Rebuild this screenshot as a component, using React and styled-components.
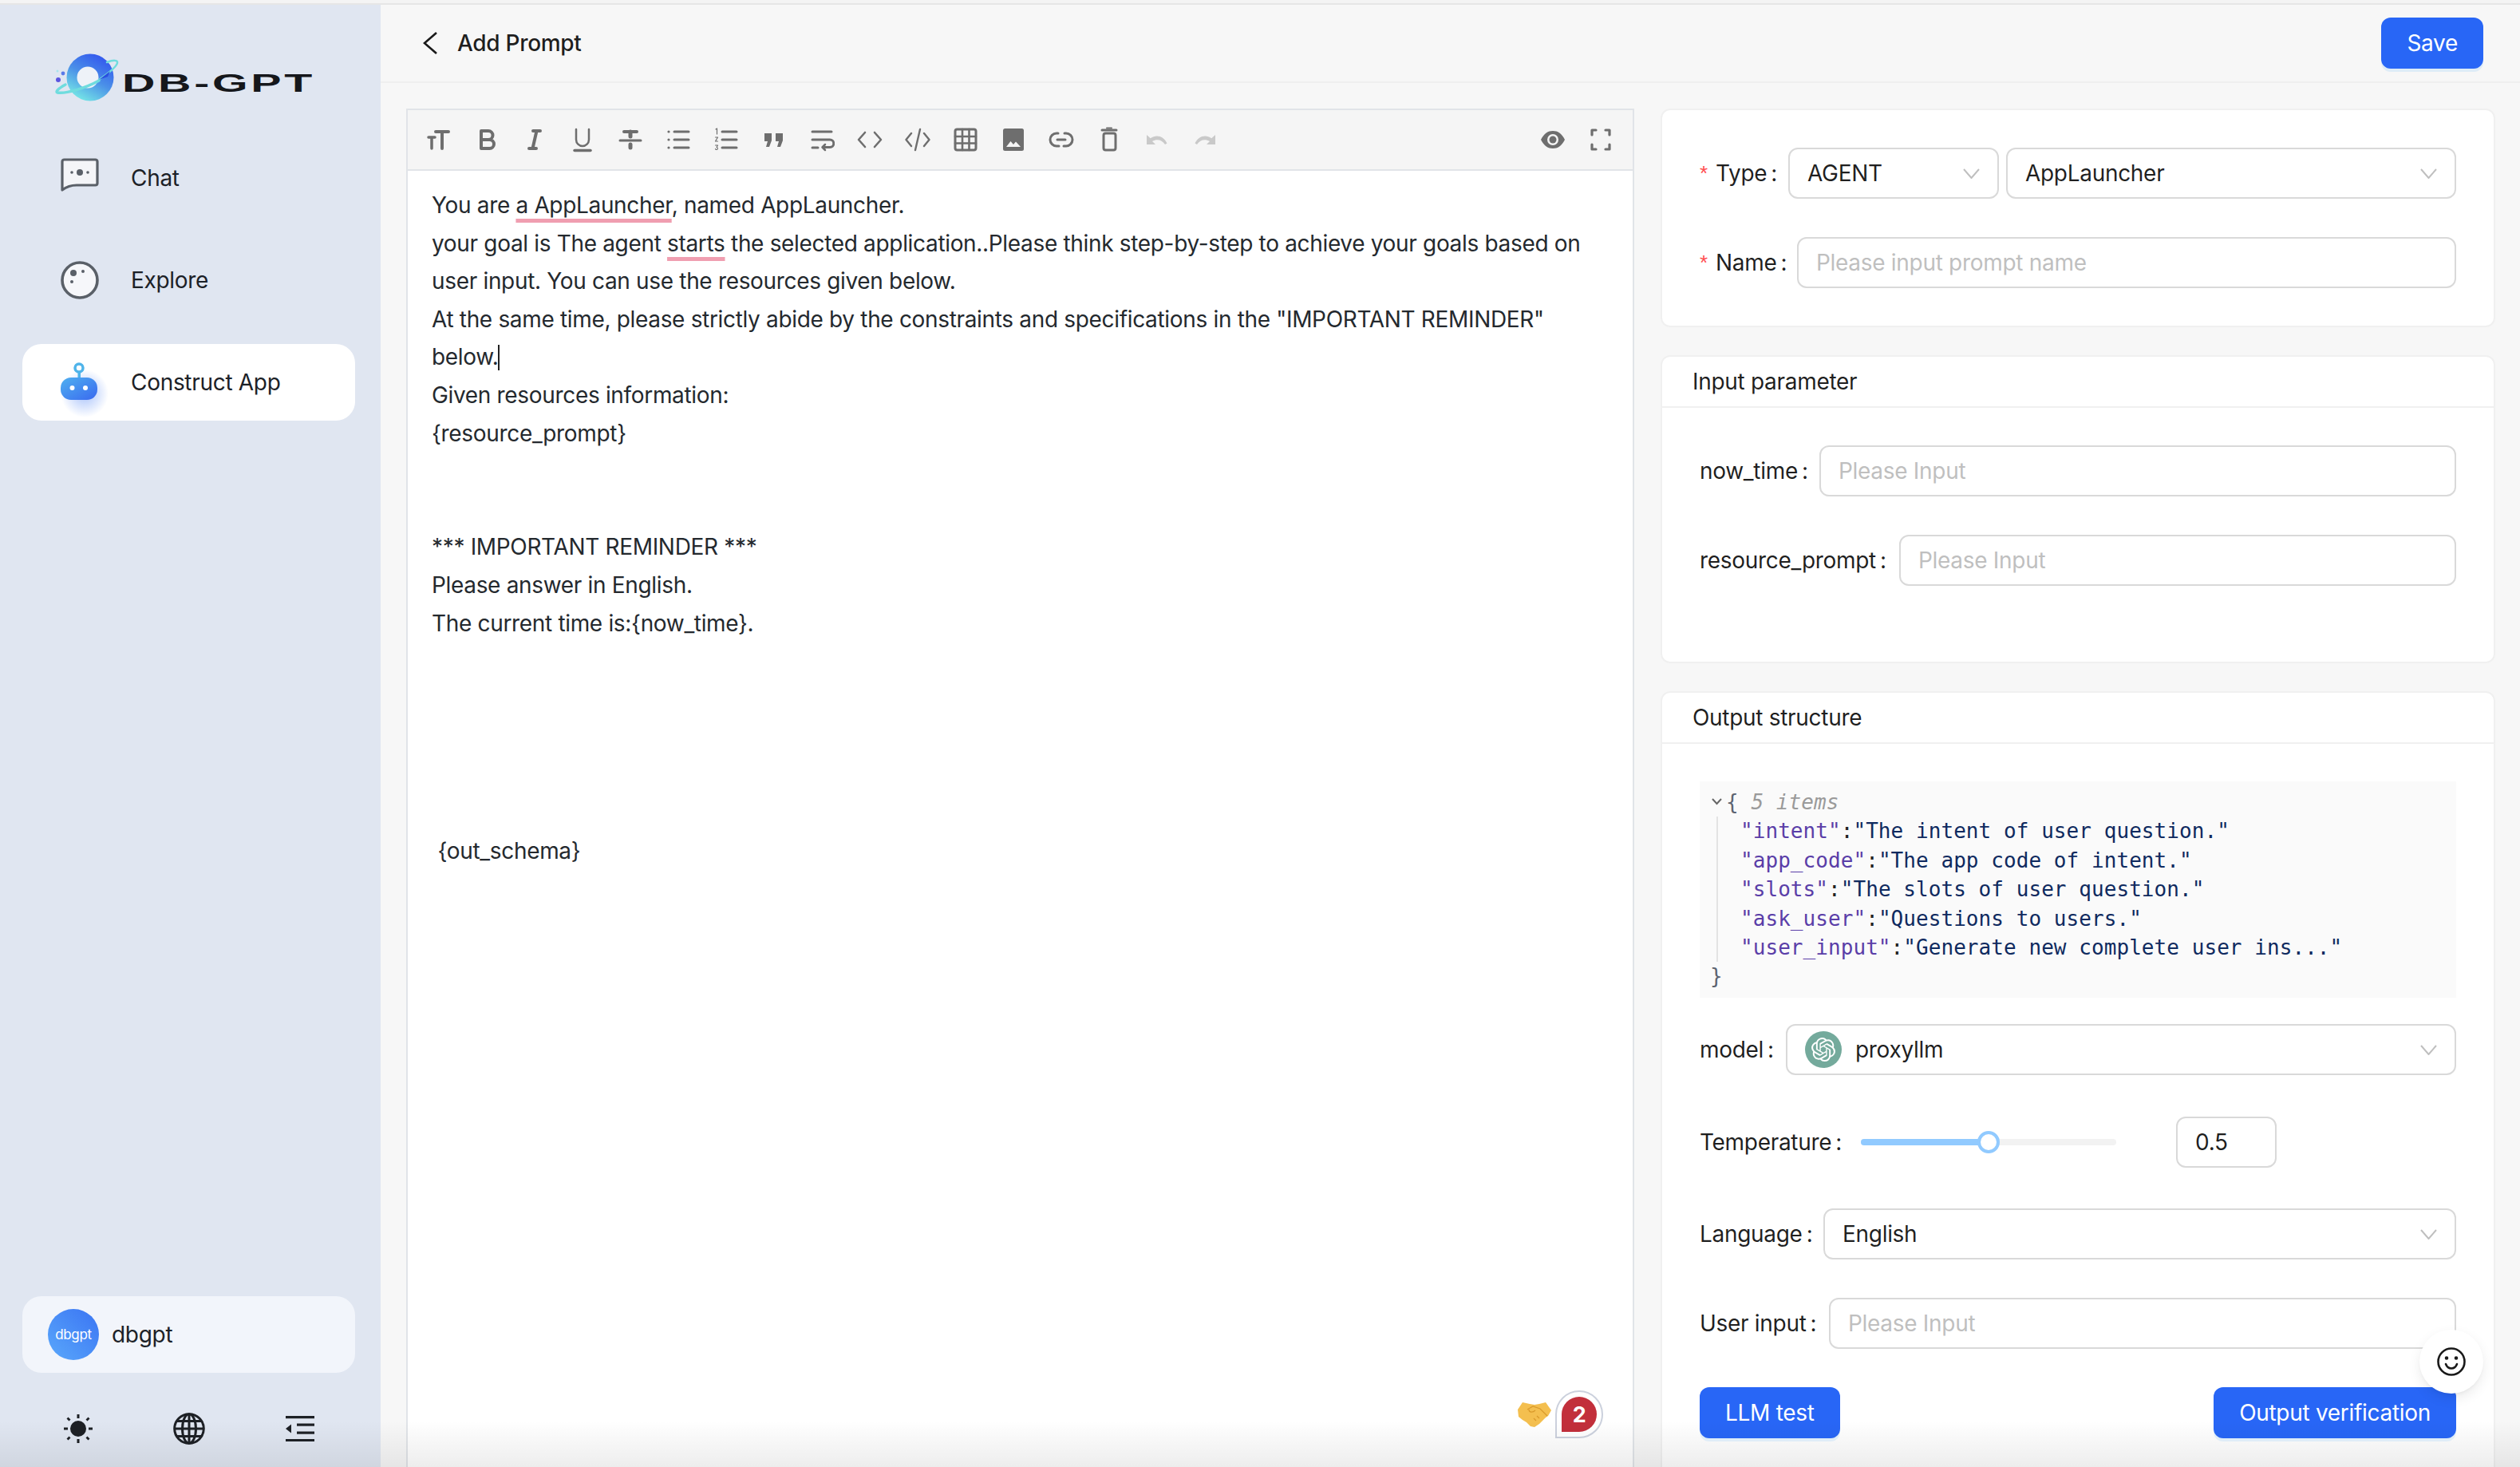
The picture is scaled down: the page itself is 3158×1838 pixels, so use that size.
import React from "react";
import styled, { createGlobalStyle } from "styled-components";
import { SiOpenai } from "react-icons/si";

const GlobalStyle = createGlobalStyle`
  html, body {
    margin: 0;
    padding: 0;
    height: 100%;
    overflow: hidden;
    background: #f7f7f7;
    font-family: Inter, "Noto Sans", sans-serif;
    font-size: 28px;
    letter-spacing: -0.3px;
    color: rgba(0, 0, 0, 0.88);
  }
  * { box-sizing: border-box; }
`;

const Page = styled.div`
  position: relative;
  width: 100vw;
  height: 100vh;
  display: flex;
  flex-direction: column;
  overflow: hidden;
  background: #f7f7f7;
`;

const TopStrip = styled.div`
  flex: 0 0 6px;
  background: #f4f4f4;
  border-bottom: 2px solid #e6e6e6;
`;

const Shell = styled.div`
  flex: 1;
  min-height: 0;
  display: flex;
`;

const Sidebar = styled.aside`
  flex: 0 0 476px;
  display: flex;
  flex-direction: column;
  background: #e0e6f1;
  padding: 59px 32px 28px 28px;
`;

const LogoWrap = styled.div`
  height: 62px;
  padding-left: 40px;
  margin-bottom: 48px;
`;

const Nav = styled.nav`
  display: flex;
  flex-direction: column;
  gap: 32px;
`;

const NavItem = styled.div`
  height: 96px;
  display: flex;
  align-items: center;
  gap: 40px;
  padding-left: 48px;
  border-radius: 24px;
  background: ${(p) => (p.$active ? "#fff" : "transparent")};
  color: #1c2127;
`;

const NavIcon = styled.svg`
  flex: 0 0 48px;
  width: 48px;
  height: 48px;
  overflow: visible;
`;

const UserCard = styled.div`
  margin-top: auto;
  height: 96px;
  display: flex;
  align-items: center;
  gap: 16px;
  padding-left: 32px;
  border-radius: 24px;
  background: #f2f5fb;
  color: #1c2127;
`;

const Avatar = styled.div`
  width: 64px;
  height: 64px;
  border-radius: 50%;
  display: flex;
  align-items: center;
  justify-content: center;
  color: #fff;
  font-size: 17px;
  background: linear-gradient(45deg, #5aa8fb, #3a74f3);
`;

const SideFooter = styled.div`
  display: grid;
  grid-template-columns: repeat(3, 139px);
  justify-items: center;
  align-items: center;
  height: 40px;
  margin-top: 50px;
`;

const Main = styled.main`
  flex: 1;
  min-width: 0;
  display: flex;
  flex-direction: column;
`;

const Header = styled.header`
  flex: 0 0 98px;
  display: flex;
  align-items: center;
  justify-content: space-between;
  padding: 0 46px 0 52px;
  border-bottom: 2px solid #efefef;
`;

const BackLink = styled.div`
  display: flex;
  align-items: center;
  gap: 24px;
  font-weight: 500;
`;

const Button = styled.button`
  height: 64px;
  padding: 0 32px;
  border: 0;
  border-radius: 12px;
  background: #2866f6;
  color: #fff;
  font: inherit;
  letter-spacing: inherit;
  box-shadow: 0 4px 0 rgba(5, 145, 255, 0.1);
`;

const Content = styled.div`
  flex: 1;
  min-height: 0;
  display: grid;
  grid-template-columns: 1538px 1045px;
  gap: 34px;
  padding: 32px 32px 0 33px;
`;

const Editor = styled.section`
  position: relative;
  display: flex;
  flex-direction: column;
  margin-left: -1px;
  border: 2px solid #e1e4e8;
  border-bottom: 0;
  background: #fff;
  min-height: 0;
`;

const Toolbar = styled.div`
  flex: 0 0 76px;
  display: flex;
  align-items: center;
  justify-content: space-between;
  padding: 0 10px 0 9px;
  background: #f5f5f5;
  border-bottom: 2px solid #e1e4e8;
`;

const ToolGroup = styled.div`
  display: flex;
  align-items: center;
`;

const ToolButton = styled.span`
  width: 60px;
  height: 40px;
  display: flex;
  align-items: center;
  justify-content: center;
  color: ${(p) => (p.$disabled ? "#c9c9c9" : "#6e6e6e")};
`;

const EditorText = styled.div`
  flex: 1;
  padding: 20px 30px 0 30px;
  line-height: 47.6px;
  letter-spacing: -0.33px;
  white-space: pre-wrap;
  color: #24292e;
`;

const Misspelled = styled.span`
  text-decoration: underline;
  text-decoration-color: #f09eb0;
  text-decoration-thickness: 5px;
  text-underline-offset: 7px;
  text-decoration-skip-ink: none;
`;

const Caret = styled.span`
  display: inline-block;
  width: 2px;
  height: 32px;
  margin-right: -2px;
  vertical-align: -7px;
  background: #222;
`;

const GrammarBar = styled.div`
  position: absolute;
  right: 37px;
  bottom: 36px;
  display: flex;
  align-items: center;
  gap: 5px;
`;

const GrammarBadge = styled.div`
  width: 60px;
  height: 60px;
  border: 2px solid #ccd1dd;
  border-radius: 50% 50% 50% 0;
  background: #fff;
  display: flex;
  align-items: center;
  justify-content: center;
`;

const GrammarCount = styled.span`
  width: 44px;
  height: 44px;
  border-radius: 50% 50% 50% 0;
  background: #c22f3b;
  color: #fff;
  font-size: 27px;
  font-weight: 700;
  display: flex;
  align-items: center;
  justify-content: center;
`;

const SideColumn = styled.div`
  display: flex;
  flex-direction: column;
  gap: 35px;
  min-height: 0;
  margin-left: -1px;
`;

const Panel = styled.section`
  flex: none;
  background: #fff;
  border: 2px solid #f0f0f0;
  border-radius: 12px;
`;

const PanelHeader = styled.div`
  height: 64px;
  padding-left: 38px;
  display: flex;
  align-items: center;
  border-bottom: 2px solid #f0f0f0;
`;

const PanelBody = styled.div`
  padding: 47px;
`;

const FormRow = styled.div`
  display: flex;
  align-items: center;
  min-height: ${(p) => p.$height || 64}px;
  margin-bottom: ${(p) => (p.$last ? 0 : 48)}px;
`;

const Label = styled.label`
  flex: 0 0 ${(p) => p.$width}px;
  white-space: nowrap;
  display: flex;
  align-items: center;
`;

const Required = styled.span`
  color: #ff4d4f;
  font-size: 26px;
  font-family: "Liberation Sans", sans-serif;
  width: 20px;
`;

const Colon = styled.span`
  margin-left: 5px;
`;

const Field = styled.input`
  flex: ${(p) => (p.$fixed ? `0 0 ${p.$fixed}px` : 1)};
  min-width: 0;
  height: 64px;
  padding: 0 22px;
  border: 2px solid #d9d9d9;
  border-radius: 12px;
  background: #fff;
  font: inherit;
  letter-spacing: inherit;
  color: inherit;
  outline: 0;
  &::placeholder {
    color: #bfbfbf;
    opacity: 1;
  }
`;

const Select = styled.div`
  flex: ${(p) => (p.$fixed ? `0 0 ${p.$fixed}px` : 1)};
  min-width: 0;
  height: 64px;
  margin-left: ${(p) => (p.$spaced ? 9 : 0)}px;
  padding: 0 22px;
  border: 2px solid #d9d9d9;
  border-radius: 12px;
  background: #fff;
  display: flex;
  align-items: center;
  justify-content: space-between;
`;

const SelectValue = styled.span`
  display: flex;
  align-items: center;
  gap: 17px;
`;

const ModelLogo = styled.span`
  width: 46px;
  height: 46px;
  border-radius: 50%;
  background: #74aa9c;
  color: #fff;
  display: flex;
  align-items: center;
  justify-content: center;
`;

const Chevron = styled.svg`
  flex: none;
  width: 21px;
  height: 13px;
  fill: none;
  stroke: #bfbfbf;
  stroke-width: 2;
`;

const JsonBlock = styled.div`
  height: 271px;
  margin-bottom: 33px;
  padding: 8px 0 0 13px;
  background: #fafafa;
  font-family: "DejaVu Sans Mono", monospace;
  font-size: 26px;
  letter-spacing: 0.06px;
  line-height: 36.4px;
  white-space: pre;
  color: #5c6370;
`;

const JsonOpen = styled.div`
  display: flex;
  align-items: center;
  padding-left: 2px;
`;

const JsonToggle = styled.svg`
  width: 18px;
  height: 10px;
  fill: none;
  stroke: #666;
  stroke-width: 2;
  padding-right: 5px;
`;

const JsonMuted = styled.span`
  color: #9a9a9a;
  font-style: italic;
`;

const JsonBody = styled.div`
  margin-left: 8px;
  padding-left: 28px;
  border-left: 2px solid #e3e3e3;
`;

const JsonKey = styled.span`
  color: #5a3ea8;
`;

const JsonColon = styled.span`
  color: #222;
`;

const JsonValue = styled.span`
  color: #0f2a5f;
`;

const SliderTrack = styled.div`
  position: relative;
  flex: 0 0 320px;
  height: 8px;
  margin-right: 75px;
  border-radius: 4px;
  background: #f2f2f2;
`;

const SliderFill = styled.div`
  height: 100%;
  border-radius: 4px;
  background: #91caff;
`;

const SliderHandle = styled.div`
  position: absolute;
  top: 50%;
  width: 28px;
  height: 28px;
  border-radius: 50%;
  border: 4px solid #91caff;
  background: #fff;
  transform: translate(-50%, -50%);
`;

const ButtonRow = styled.div`
  display: flex;
  justify-content: space-between;
`;

const FloatButton = styled.div`
  position: absolute;
  right: 46px;
  bottom: 92px;
  width: 80px;
  height: 80px;
  border-radius: 50%;
  background: #fff;
  display: flex;
  align-items: center;
  justify-content: center;
  box-shadow: 0 6px 16px rgba(0, 0, 0, 0.08), 0 3px 6px -4px rgba(0, 0, 0, 0.12);
`;

const BottomFade = styled.div`
  position: absolute;
  left: 0;
  right: 0;
  bottom: 0;
  height: 58px;
  pointer-events: none;
  background: linear-gradient(rgba(0, 0, 0, 0), rgba(0, 0, 0, 0.07));
`;

const S = { fill: "none", stroke: "currentColor", strokeWidth: 3, strokeLinecap: "round", strokeLinejoin: "round" };
const F = { fill: "currentColor" };

const toolIcons = {
  title: <g {...S} strokeWidth="4"><path d="M12 6h16M20 6v21" /><path d="M3 13h8M7 13v14" strokeWidth="3.5" /></g>,
  bold: <g {...S} strokeWidth="4"><path d="M9 5h9a5.5 5.5 0 0 1 0 11H9zM9 16h10.5a5.5 5.5 0 0 1 0 11H9z" /></g>,
  italic: <g {...S} strokeWidth="4"><path d="M14 5h9M18.5 5l-5 22M9 27h9" /></g>,
  underline: <g {...S} strokeWidth="2.5"><path d="M8 3v13a8 8 0 0 0 16 0V3" /><path d="M6 29.5h20" strokeWidth="3.5" /></g>,
  strike: <g {...S}><path d="M8 6h16" strokeWidth="4" /><path d="M3 17h26" strokeWidth="3" /><path d="M16 6v6" strokeWidth="5" /><path d="M16 22v4" strokeWidth="5" /></g>,
  ul: <g {...S}><path d="M11 6h18M11 16h18M11 26h18" /><circle cx="4" cy="6" r="1.6" {...F} strokeWidth="0" /><circle cx="4" cy="16" r="1.6" {...F} strokeWidth="0" /><circle cx="4" cy="26" r="1.6" {...F} strokeWidth="0" /></g>,
  ol: <g {...S}><path d="M11 6h18M11 16h18M11 26h18" /><path d="M3 3l1.5-1v7M2.5 13h3l-3 5h3M2.5 23h3l-1.5 2.5a1.5 1.5 0 1 1-1.5 2" strokeWidth="1.2" /></g>,
  quote: <g {...F}><path d="M4 8h9v9l-3 8H6l2-7H4zM18 8h9v9l-3 8h-4l2-7h-4z" /></g>,
  wrap: <g {...S}><path d="M4 6h24M4 16h22a3.5 3.5 0 0 1 0 9.5h-8M4 26h7" /><path d="M20 22l-3.5 3.5L20 29" strokeWidth="2.5" /></g>,
  code: <g {...S} strokeWidth="2.6"><path d="M10 7L2 16l8 9M22 7l8 9-8 9" /></g>,
  codeBlock: <g {...S} strokeWidth="2.4"><path d="M8 8L1.5 16 8 24M24 8l6.5 8L24 24M19 3L13 29" /></g>,
  table: <g {...S}><rect x="3" y="3" width="26" height="26" rx="2.5" /><path d="M12 3v26M20.5 3v26M3 12h26M3 20.5h26" strokeWidth="2.6" /></g>,
  image: <g><rect x="3" y="2" width="26" height="28" rx="2.5" {...F} /><path d="M7 25l5.5-7 3.500 4 3-3.500 6 6.500z" fill="#f5f5f5" /></g>,
  link: <g {...S}><path d="M12 8H10a8 8 0 0 0 0 16h3M20 8h2a8 8 0 0 1 0 16h-3M11 16h10" /></g>,
  trash: <g {...S}><rect x="9" y="8" width="15" height="21" rx="2.5" /><path d="M7 4h18" strokeWidth="3" /><path d="M13 1.5h6" strokeWidth="2" /></g>,
  undo: <g {...F}><path d="M3 10v12h11l-4-4c6-3.5 12-2 16 4l2.5-1.5C24 11 15 9 7.8 14.2z" /></g>,
  redo: <g {...F} transform="matrix(-1 0 0 1 32 0)"><path d="M3 10v12h11l-4-4c6-3.5 12-2 16 4l2.5-1.5C24 11 15 9 7.8 14.2z" /></g>,
  eye: <g><path d="M1 16C5 8 10 5 16 5s11 3 15 11c-4 8-9 11-15 11S5 24 1 16z" {...F} /><circle cx="16" cy="16" r="7" fill="#f5f5f5" /><circle cx="16" cy="16" r="4.500" {...F} /></g>,
  fullscreen: <g {...S} strokeWidth="3.200"><path d="M10 4H5v6M22 4h5v6M10 28H5v-6M22 28h5v-6" /></g>,
};

const ToolIcon = ({ name }) => (
  <svg width="32" height="32" viewBox="0 0 32 32">{toolIcons[name]}</svg>
);

const DownArrow = () => (
  <Chevron viewBox="0 0 21 13"><path d="M1 1l9.500 11L20 1" /></Chevron>
);

const Logo = () => (
  <svg width="340" height="64" viewBox="0 0 340 64" style={{ overflow: "visible" }}>
    <defs>
      <linearGradient id="planet" x1="0.85" y1="0.1" x2="0.35" y2="1">
        <stop offset="0" stopColor="#3358ee" />
        <stop offset="0.5" stopColor="#4a8fe8" />
        <stop offset="1" stopColor="#74e4e6" />
      </linearGradient>
    </defs>
    <circle cx="45" cy="32" r="29.500" fill="url(#planet)" />
    <circle cx="42" cy="32" r="13.500" fill="#eef2f8" />
    <path d="M14 41c-9 5-13 9-10 10 10 2 36-6 52-15" fill="none" stroke="#6fdcde" strokeWidth="3.500" strokeLinecap="round" />
    <path d="M66 13c8-3 14-3 13 1-1 4-10 12-23 21" fill="none" stroke="#6fdcde" strokeWidth="2.500" strokeLinecap="round" />
    <path d="M56 35l14-11-3 7z" fill="#2b4fe0" />
    <circle cx="5" cy="35" r="3" fill="#5b55e0" />
    <circle cx="11" cy="27" r="2.400" fill="#5b7ae8" />
    <circle cx="4" cy="24" r="1.500" fill="#a8e4ee" />
    <text transform="translate(85 50) scale(1.85 1)" letterSpacing="2" fontFamily="'Liberation Sans', sans-serif" fontWeight="700" fontSize="31" fill="#15171b">DB-GPT</text>
  </svg>
);

const ChatIcon = () => (
  <NavIcon viewBox="0 0 48 48">
    <path d="M2 3.500A2.500 2.500 0 0 1 4.500 1h39A2.500 2.500 0 0 1 46 3.500v27a2.500 2.500 0 0 1-2.500 2.500H20C12 33 6 36 2 39z" fill="#f4f5f8" stroke="#5a6068" strokeWidth="3.200" strokeLinejoin="round" />
    <circle cx="24" cy="17" r="4" fill="#5a6068" />
    <circle cx="14" cy="17" r="1.800" fill="#5a6068" />
    <circle cx="34" cy="17" r="1.800" fill="#5a6068" />
  </NavIcon>
);

const ExploreIcon = () => (
  <NavIcon viewBox="0 0 48 48">
    <circle cx="24" cy="24" r="22" fill="#f6f7fa" stroke="#5a6068" strokeWidth="3.600" />
    <circle cx="16" cy="15" r="4" fill="#5a6068" />
    <circle cx="28" cy="13" r="2" fill="#5a6068" />
    <circle cx="14" cy="26" r="2" fill="#5a6068" />
  </NavIcon>
);

const RobotIcon = () => (
  <NavIcon viewBox="0 0 48 48">
    <defs>
      <radialGradient id="robotGlow">
        <stop offset="0" stopColor="#3f78f5" stopOpacity="0.45" />
        <stop offset="1" stopColor="#3f78f5" stopOpacity="0" />
      </radialGradient>
      <linearGradient id="robotBody" x1="0" y1="0" x2="1" y2="1">
        <stop offset="0" stopColor="#4fb0f0" />
        <stop offset="1" stopColor="#3a69ef" />
      </linearGradient>
    </defs>
    <circle cx="30" cy="38" r="30" fill="url(#robotGlow)" />
    <circle cx="23" cy="6" r="5" fill="#fff" stroke="#4fb4ea" strokeWidth="3.500" />
    <rect x="21.500" y="11" width="3.500" height="9" fill="#4fb4ea" />
    <rect x="0" y="18" width="46" height="28" rx="13" fill="url(#robotBody)" />
    <circle cx="14.500" cy="31" r="3" fill="#fff" />
    <circle cx="31" cy="31" r="3" fill="#fff" />
  </NavIcon>
);

const SunIcon = () => (
  <svg width="36" height="36" viewBox="0 0 36 36" fill="#1d2025">
    <circle cx="18" cy="18" r="10" />
    <path d="M16.500 0h3v5h-3zM16.500 31h3v5h-3zM0 16.500h5v3H0zM31 16.500h5v3h-5z" />
    <path d="M5.500 3.500l3 3-2 2-3-3zM30.500 3.500l2 2-3 3-2-2zM5.500 32.500l-2-2 3-3 2 2zM30.500 32.500l-3-3 2-2 3 3z" />
  </svg>
);

const GlobeIcon = () => (
  <svg width="40" height="40" viewBox="0 0 40 40" fill="none" stroke="#1d2025" strokeWidth="3">
    <circle cx="20" cy="20" r="18.300" />
    <ellipse cx="20" cy="20" rx="8.500" ry="18.300" />
    <path d="M20 2v36M2 20h36M5 10.500h30M5 29.500h30" />
  </svg>
);

const OutdentIcon = () => (
  <svg width="36" height="32" viewBox="0 0 36 32" fill="#1d2025">
    <rect y="0" width="36" height="3.200" />
    <rect x="14" y="9.500" width="22" height="3.200" />
    <rect x="14" y="19.500" width="22" height="3.200" />
    <rect y="29" width="36" height="3.200" />
    <path d="M0 16l7-5.500v11z" />
  </svg>
);

const SmileIcon = () => (
  <svg width="36" height="36" viewBox="0 0 36 36" fill="none" stroke="#1a1a1a" strokeWidth="2.600" strokeLinecap="round">
    <circle cx="18" cy="18" r="16.500" />
    <path d="M11 21c1.500 4 4 5.500 7 5.500s5.500-1.500 7-5.500" />
    <circle cx="12" cy="13.500" r="1" fill="#1a1a1a" />
    <circle cx="24" cy="13.500" r="1" fill="#1a1a1a" />
  </svg>
);

const HandshakeIcon = () => (
  <svg width="42" height="32" viewBox="0 0 42 32">
    <path d="M0 10L6 1l9 2 6 1 6-1 8-2 7 10-4 7-3 2-8 8-6 4-5-1-5-5-5-3-5-4z" fill="#f4bf4f" />
    <path d="M12 10l7-4 9 3 9 9M14 10c0 4 5 4 8 1M23 24l-3-3M27 21l-3-3" fill="none" stroke="#d99a2b" strokeWidth="1.200" />
  </svg>
);

const FormField = ({ label, width, required, children, ...rest }) => (
  <FormRow {...rest}>
    <Label $width={width}>
      {required && <Required>*</Required>}
      {label}
      <Colon>:</Colon>
    </Label>
    {children}
  </FormRow>
);

const jsonRows = [
  ["intent", "The intent of user question."],
  ["app_code", "The app code of intent."],
  ["slots", "The slots of user question."],
  ["ask_user", "Questions to users."],
  ["user_input", "Generate new complete user ins..."],
];

const toolbarLeft = ["title", "bold", "italic", "underline", "strike", "ul", "ol", "quote", "wrap", "code", "codeBlock", "table", "image", "link", "trash"];

export default function App() {
  return (
    <Page>
      <GlobalStyle />
      <TopStrip />
      <Shell>
        <Sidebar>
          <LogoWrap>
            <Logo />
          </LogoWrap>
          <Nav>
            <NavItem><ChatIcon />Chat</NavItem>
            <NavItem><ExploreIcon />Explore</NavItem>
            <NavItem $active><RobotIcon />Construct App</NavItem>
          </Nav>
          <UserCard>
            <Avatar>dbgpt</Avatar>
            dbgpt
          </UserCard>
          <SideFooter>
            <SunIcon />
            <GlobeIcon />
            <OutdentIcon />
          </SideFooter>
        </Sidebar>
        <Main>
          <Header>
            <BackLink>
              <svg width="20" height="30" viewBox="0 0 20 30" fill="none" stroke="#1a1a1a" strokeWidth="2.600">
                <path d="M18 2L3 15l15 13" />
              </svg>
              Add Prompt
            </BackLink>
            <Button>Save</Button>
          </Header>
          <Content>
            <Editor>
              <Toolbar>
                <ToolGroup>
                  {toolbarLeft.map((name) => (
                    <ToolButton key={name}><ToolIcon name={name} /></ToolButton>
                  ))}
                  <ToolButton $disabled><ToolIcon name="undo" /></ToolButton>
                  <ToolButton $disabled><ToolIcon name="redo" /></ToolButton>
                </ToolGroup>
                <ToolGroup>
                  <ToolButton><ToolIcon name="eye" /></ToolButton>
                  <ToolButton><ToolIcon name="fullscreen" /></ToolButton>
                </ToolGroup>
              </Toolbar>
              <EditorText>
                You are <Misspelled>a AppLauncher</Misspelled>, named AppLauncher.{"\n"}
                your goal is The agent <Misspelled>starts</Misspelled> the selected application..Please think step-by-step to achieve your goals based on user input. You can use the resources given below.{"\n"}
                At the same time, please strictly abide by the constraints and specifications in the "IMPORTANT REMINDER" below.<Caret />{"\n"}
                Given resources information:{"\n"}
                {"{resource_prompt}"}{"\n\n\n"}
                *** IMPORTANT REMINDER ***{"\n"}
                Please answer in English.{"\n"}
                The current time is:{"{now_time}"}.{"\n\n\n\n\n\n"}
                {" {out_schema}"}
              </EditorText>
              <GrammarBar>
                <HandshakeIcon />
                <GrammarBadge><GrammarCount>2</GrammarCount></GrammarBadge>
              </GrammarBar>
            </Editor>
            <SideColumn>
              <Panel>
                <PanelBody>
                  <FormField label="Type" width={111} required>
                    <Select $fixed={264}>AGENT<DownArrow /></Select>
                    <Select $spaced>AppLauncher<DownArrow /></Select>
                  </FormField>
                  <FormField label="Name" width={122} required $last>
                    <Field placeholder="Please input prompt name" />
                  </FormField>
                </PanelBody>
              </Panel>
              <Panel>
                <PanelHeader>Input parameter</PanelHeader>
                <PanelBody>
                  <FormField label="now_time" width={150}>
                    <Field placeholder="Please Input" />
                  </FormField>
                  <FormField label="resource_prompt" width={250}>
                    <Field placeholder="Please Input" />
                  </FormField>
                </PanelBody>
              </Panel>
              <Panel>
                <PanelHeader>Output structure</PanelHeader>
                <PanelBody>
                  <JsonBlock>
                    <JsonOpen>
                      <JsonToggle viewBox="0 0 13 10"><path d="M1 1l5.500 6L12 1" /></JsonToggle>
                      {"{ "}<JsonMuted>5 items</JsonMuted>
                    </JsonOpen>
                    <JsonBody>
                      {jsonRows.map(([key, value]) => (
                        <div key={key}>
                          <JsonKey>"{key}"</JsonKey>
                          <JsonColon>:</JsonColon>
                          <JsonValue>"{value}"</JsonValue>
                        </div>
                      ))}
                    </JsonBody>
                    {"}"}
                  </JsonBlock>
                  <FormField label="model" width={108}>
                    <Select>
                      <SelectValue>
                        <ModelLogo><SiOpenai size={30} /></ModelLogo>
                        proxyllm
                      </SelectValue>
                      <DownArrow />
                    </Select>
                  </FormField>
                  <FormField label="Temperature" width={202} $height={71}>
                    <SliderTrack>
                      <SliderFill style={{ width: "50%" }} />
                      <SliderHandle style={{ left: "50%" }} />
                    </SliderTrack>
                    <Field $fixed={126} defaultValue="0.5" />
                  </FormField>
                  <FormField label="Language" width={155}>
                    <Select>English<DownArrow /></Select>
                  </FormField>
                  <FormField label="User input" width={162}>
                    <Field placeholder="Please Input" />
                  </FormField>
                  <ButtonRow>
                    <Button>LLM test</Button>
                    <Button>Output verification</Button>
                  </ButtonRow>
                </PanelBody>
              </Panel>
            </SideColumn>
          </Content>
        </Main>
      </Shell>
      <BottomFade />
      <FloatButton><SmileIcon /></FloatButton>
    </Page>
  );
}
